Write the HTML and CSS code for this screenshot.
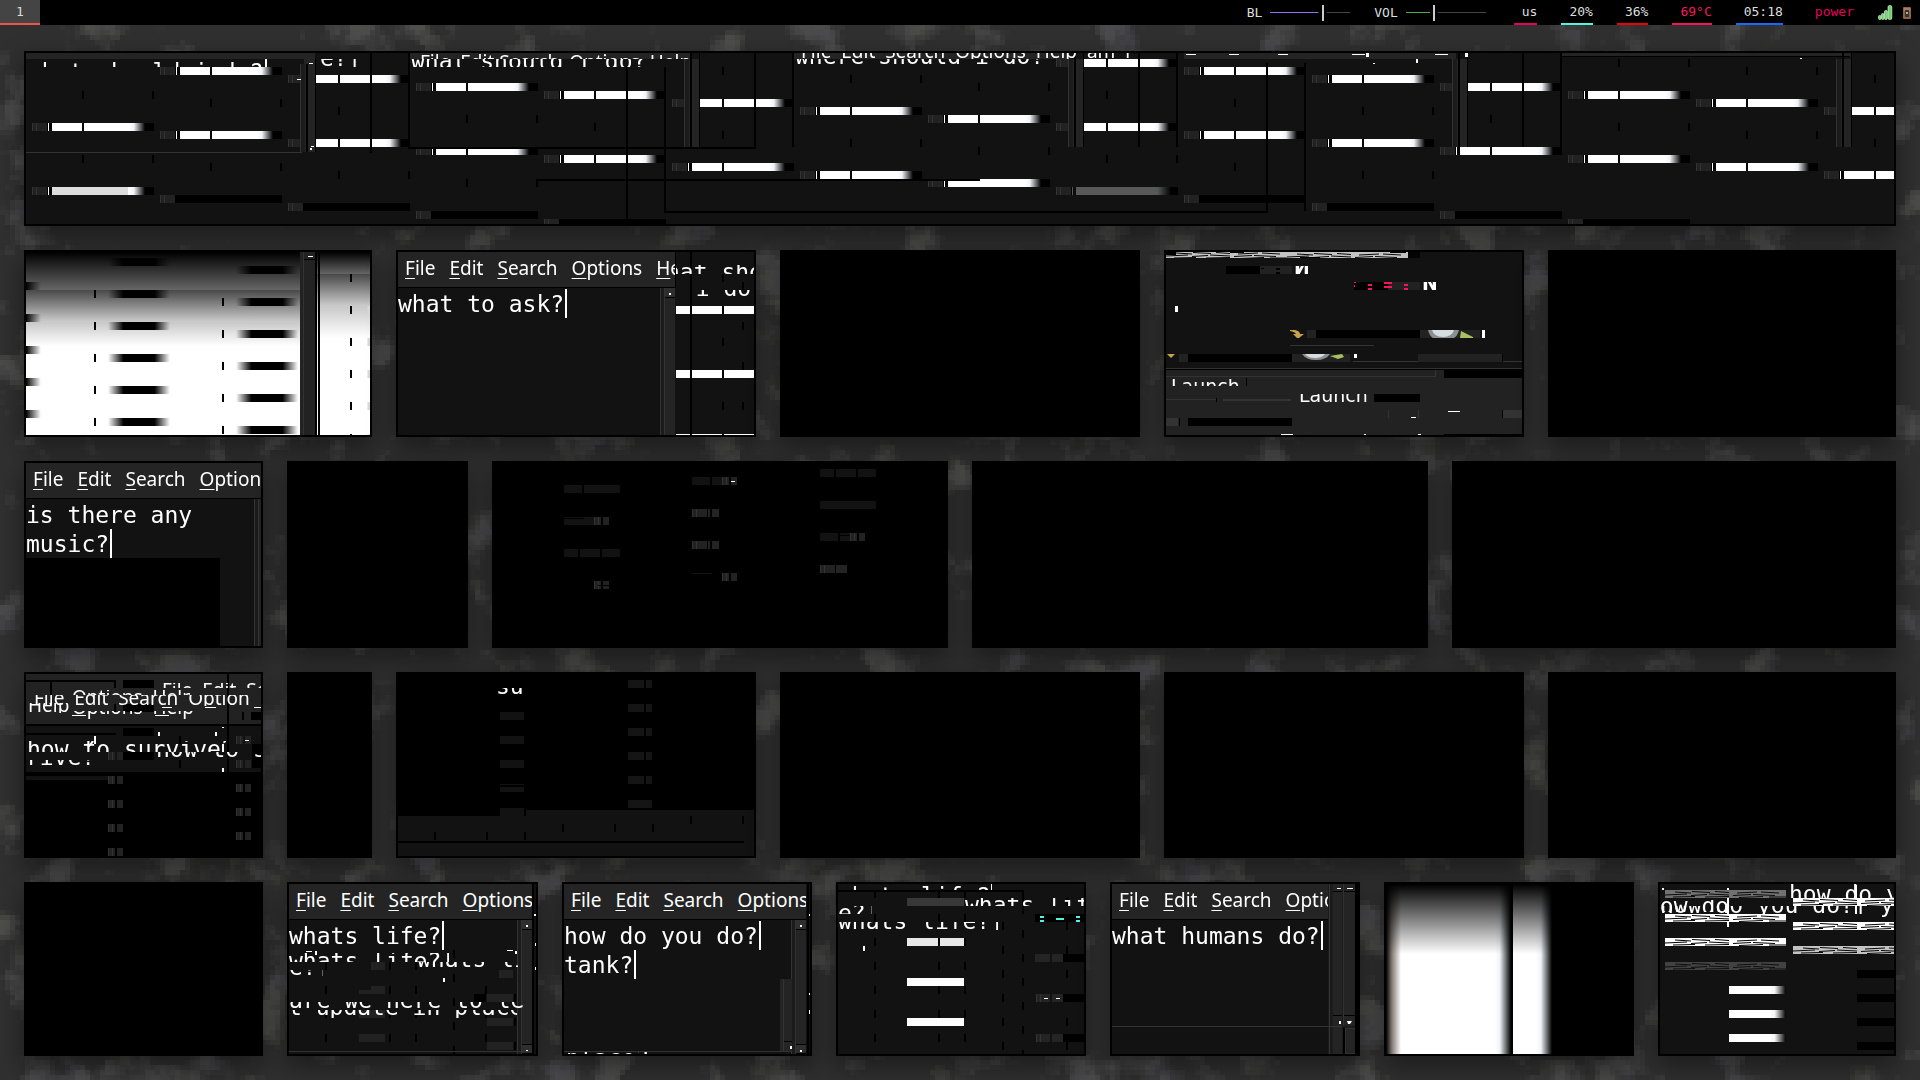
FILE: index.html
```html
<!DOCTYPE html>
<html lang="en">
<head>
<meta charset="utf-8">
<title>Desktop</title>
<link rel="stylesheet" href="styles.css">
</head>
<body>
<svg class="wallpaper" aria-hidden="true">
  <defs>
    <filter id="camo" filterUnits="userSpaceOnUse" x="0" y="0" width="100%" height="100%">
      <feTurbulence type="fractalNoise" baseFrequency="0.02" numOctaves="4" seed="7" result="n"/>
      <feColorMatrix in="n" type="matrix" values="0 .2 0 0 .25  0 .2 0 0 .25  0 0 .2 0 .25  5 0 0 0 -2.7" result="c"/>
      <feFlood x="2" y="2" width="1" height="1" flood-color="#000" result="dot"/>
      <feComposite in="dot" in2="dot" operator="over" x="0" y="0" width="5" height="5" result="cell"/>
      <feTile in="cell" result="grid"/>
      <feComposite in="c" in2="grid" operator="in"/>
      <feMorphology operator="dilate" radius="2"/>
    </filter>
    <linearGradient id="fadeR"><stop offset="0" stop-color="#fff"/><stop offset=".3" stop-color="#f0f4f8"/><stop offset="1" stop-color="#000"/></linearGradient>
    <linearGradient id="slot"><stop offset="0" stop-color="#000" stop-opacity="0"/><stop offset=".25" stop-color="#000"/><stop offset=".75" stop-color="#000"/><stop offset="1" stop-color="#100800" stop-opacity="0"/></linearGradient>
    <linearGradient id="slotEnd"><stop offset="0" stop-color="#000"/><stop offset="1" stop-color="#100800" stop-opacity="0"/></linearGradient>
    <g id="grip"><path fill="#222" d="M0 0h15v8H0z"/><path fill="#333" d="M0 0h1v8H0zM4 0h1v8H4z"/></g>
    <g id="bar">
      <use href="#grip"/>
      <path d="M15 0h107v8H15z"/>
      <path fill="#fff" d="M16 0h1v8h-1zM20 0h30v8H20zM52 0h46v8H52z"/>
      <path fill="url(#fadeR)" d="M97 0h16v8H97z"/>
    </g>
    <g id="tick"><path d="M50 0h2v8h-2zM120 0h2v8h-2z"/></g>
    <g id="cell"><use href="#bar"/><use href="#tick" y="32"/></g>
    <g id="off"><use href="#grip"/><path d="M15 0h107v8H15z"/></g>
    <g id="track"><path fill="#1b1b1b" d="M0 0h16v88H0z"/><path fill="#333" d="M0 0h1v88H0z"/><path fill="#242424" d="M5 0h10v88H5z"/><path d="M6 -6h2v94H6zM15 -6h1v94h-1z"/></g>
    <g id="nub"><path fill="#222" d="M0 0h7v8H0zM9 0h6v8H9z"/><path fill="#333" d="M0 0h1v8H0zM4 0h1v8H4z"/></g>
    <g id="scratch">
      <path fill="#fff" d="M0 0h121v8H0z"/>
      <path stroke="#000" fill="none" d="M10 2l16 1M27 1.500l18 1M50 1.500l14 1M72 3l20-1M96 2l18 1M0 5l22-1M26 5.500l16-1M44 4l20 1M68 5.500l18-1M88 4.500l22 1M8 7l22-.5M40 7l24-.5M74 7.500l24-1M104 7h17"/>
    </g>
  </defs>
  <rect width="100%" height="100%" filter="url(#camo)"/>
</svg>

<header class="bar">
  <nav><button class="workspace">1</button></nav>
  <div class="status">
    <label class="meter bl">BL<input type="range" min="0" max="100" value="67"></label>
    <label class="meter vol">VOL<input type="range" min="0" max="100" value="33"></label>
    <span class="stat pink">us</span>
    <span class="stat cyan">20%</span>
    <span class="stat red">36%</span>
    <span class="stat hot">69°C</span>
    <time class="stat blue">05:18</time>
    <button class="stat power">power</button>
    <svg class="tray" viewBox="0 0 34 16" aria-hidden="true">
      <g fill="#6fd06f" stroke="#d4f4d4" stroke-width=".7"><rect x=".5" y="10.500" width="2.500" height="4" rx="1"/><rect x="3.500" y="8.500" width="2.500" height="6" rx="1"/><rect x="6.500" y="5.500" width="2.800" height="9" rx="1"/><rect x="10" y=".5" width="3.800" height="14" rx="1.500"/></g>
      <rect x="25" y="2" width="8" height="12" rx="1" fill="#8d6446"/><rect x="26" y="3" width="6" height="3" fill="#a87e5c"/><rect x="27" y="5" width="4" height="7" fill="#3a3431"/><rect x="28" y="7" width="2" height="2" fill="#aaa"/>
    </svg>
  </div>
</header>

<main class="desktop">
  <div class="row row-a">
    <section class="win">
      <svg class="glitch" viewBox="26 53 1868 171" preserveAspectRatio="xMinYMin slice">
        <path fill="#242424" d="M26 53h279v6H26zM410 53h280v6H410zM794 53h274v6H794zM1184 53h272v6H1184zM1562 53h290v4H1562z"/>
        <use href="#cell" x="32" y="123"/><use href="#tick" x="32" y="91"/>
        <use href="#cell" x="160" y="67"/><use href="#cell" x="160" y="131"/><use href="#off" x="160" y="195"/>
        <use href="#cell" x="288" y="75"/><use href="#cell" x="288" y="139"/><use href="#off" x="288" y="203"/>
        <use href="#cell" x="416" y="83"/><use href="#cell" x="416" y="147"/><use href="#off" x="416" y="211"/>
        <use href="#cell" x="544" y="91"/><use href="#bar" x="544" y="155"/><use href="#off" x="544" y="219"/>
        <use href="#tick" x="672" y="67"/><use href="#cell" x="672" y="99"/><use href="#bar" x="672" y="163"/>
        <use href="#tick" x="800" y="75"/><use href="#cell" x="800" y="107"/><use href="#bar" x="800" y="171"/>
        <use href="#tick" x="928" y="83"/><use href="#cell" x="928" y="115"/><use href="#bar" x="928" y="179"/><path fill="#fff" d="M978 181h4v6h-4zM980 179h2v8h-2z"/>
        <use href="#cell" x="1056" y="59"/><use href="#cell" x="1056" y="123"/><use href="#bar" x="1056" y="187"/><path fill="#fff" d="M1106 187h2v8h-2z"/>
        <path fill="#121212" opacity=".7" d="M1072 187h98v8h-98z"/>
        <use href="#cell" x="1184" y="67"/><use href="#cell" x="1184" y="131"/><use href="#off" x="1184" y="195"/>
        <use href="#cell" x="1312" y="75"/><use href="#cell" x="1312" y="139"/><use href="#off" x="1312" y="203"/>
        <use href="#cell" x="1440" y="83"/><use href="#bar" x="1440" y="147"/><use href="#off" x="1440" y="211"/>
        <use href="#tick" x="1568" y="59"/><use href="#cell" x="1568" y="91"/><use href="#bar" x="1568" y="155"/><use href="#off" x="1568" y="219"/>
        <use href="#tick" x="1696" y="67"/><use href="#cell" x="1696" y="99"/><use href="#bar" x="1696" y="163"/>
        <use href="#tick" x="1824" y="75"/><use href="#cell" x="1824" y="107"/><use href="#bar" x="1824" y="171"/>
        <use href="#bar" x="32" y="187"/><path fill="#ddd" d="M52 187h76v8H52z"/>
        <use href="#track" x="300" y="64"/><path fill="#242424" d="M304 53h11v11h-11z"/><path fill="#fff" d="M309 63h4v1h-4zM311 146h3v1h-3zM310 148h2v2h-2zM297 79h4v1h-4z"/>
        <path fill="#333" d="M26 152h276v1H26z"/>
        <use href="#track" x="684" y="59"/><use href="#track" x="1068" y="59"/><use href="#track" x="1452" y="59"/><use href="#track" x="1836" y="59"/>
        <path d="M370 53h2v100h-2zM408 53h2v96h-2zM410 147h346v2H410zM754 53h2v96h-2zM792 53h2v94h-2zM626 66h2v153h-2zM536 179h444v2H536zM664 67h2v146h-2zM664 211h604v2H664zM1266 63h2v150h-2zM1304 63h2v148h-2zM1138 53h2v94h-2zM1176 53h2v94h-2zM1522 53h2v94h-2zM1560 53h2v94h-2zM1562 56h288v1h-288z"/>
        <path fill="#fff" d="M1186 54h10v1h-10zM1229 54h10v1h-10zM1278 54h10v1h-10zM1352 54h13v1h-13zM1366 53h3v4h-3zM1435 54h13v1h-13zM1465 53h3v4h-3zM1416 59h2v4h-2zM1373 63h2v1h-2zM1800 58h2v1h-2zM265 59h2v8h-2z"/>
        <svg x="26" y="60" width="250" height="7"><text class="mono" x="2" y="20">what should i do?</text></svg>
        <svg x="320" y="59" width="50" height="8"><text class="mono" x="0" y="7">e?|</text></svg>
        <svg x="410" y="54" width="292" height="5"><text class="menu-text" x="10" y="15">File  Edit Search  Options  Help</text></svg>
        <svg x="410" y="59" width="244" height="8"><text class="mono" x="1" y="10">what should i do?</text></svg>
        <svg x="797" y="53" width="380" height="6"><text class="menu-text" x="4" y="5">File  Edit  Search  Options  Help  am  i</text></svg>
        <svg x="794" y="59" width="250" height="8"><text class="mono" x="1" y="5">where should i do?|</text></svg>
      </svg>
    </section>
  </div>

  <div class="row row-b">
    <section class="win">
      <svg class="glitch" viewBox="26 252 344 183" preserveAspectRatio="xMinYMin slice">
        <defs>
          <linearGradient id="r1" x1="0" y1="0" x2="0" y2="1"><stop offset="0"/><stop offset="1" stop-color="#666"/></linearGradient>
          <linearGradient id="r2" x1="0" y1="0" x2="0" y2="1"><stop offset="0" stop-color="#484848"/><stop offset="1" stop-color="#ccc"/></linearGradient>
          <linearGradient id="r3" x1="0" y1="0" x2="0" y2="1"><stop offset="0" stop-color="#c8c8c8"/><stop offset="1" stop-color="#fff"/></linearGradient>
        </defs>
        <path fill="#fff" d="M26 252h344v183H26z"/>
        <path fill="url(#r1)" d="M26 252h274v38H26z"/><path fill="url(#r2)" d="M26 290h274v32H26z"/><path fill="url(#r3)" d="M26 322h274v24H26z"/>
        <path fill="url(#r1)" d="M317 252h53v22h-53z"/><path fill="url(#r2)" d="M317 274h53v32h-53z"/><path fill="url(#r3)" d="M317 306h53v32h-53z"/>
        <g fill="url(#slot)">
          <rect x="108" y="258" width="62" height="8"/><rect x="108" y="290" width="62" height="8"/><rect x="108" y="322" width="62" height="8"/><rect x="108" y="354" width="62" height="8"/><rect x="108" y="386" width="62" height="8"/><rect x="108" y="418" width="62" height="8"/>
          <rect x="236" y="266" width="62" height="8"/><rect x="236" y="298" width="62" height="8"/><rect x="236" y="330" width="62" height="8"/><rect x="236" y="362" width="62" height="8"/><rect x="236" y="394" width="62" height="8"/><rect x="236" y="426" width="62" height="8"/>
        </g>
        <g fill="url(#slotEnd)"><rect x="26" y="282" width="15" height="8"/><rect x="26" y="314" width="15" height="8"/><rect x="26" y="346" width="15" height="8"/><rect x="26" y="378" width="15" height="8"/><rect x="26" y="410" width="15" height="8"/></g>
        <g stroke="#000" stroke-width="2" stroke-dasharray="8 24"><path d="M95 290v145M223 298v137M351 274v161"/></g>
        <g stroke="#d4dade" stroke-width="3" stroke-dasharray="8 24"><path d="M369 306v129"/></g>
        <path fill="#222" d="M300 252h15v183h-15z"/><path fill="#333" d="M303 252h1v183h-1z"/><path d="M315 252h2v183h-2zM318 252h2v183h-2zM304 259h11v1h-11z"/><path fill="#fff" d="M308 256h5v1h-5z"/>
      </svg>
    </section>
    <section class="win">
      <div class="editor cut-b">
        <nav class="menu"><button>File</button><button>Edit</button><button>Search</button><button>Options</button><button>Help</button></nav>
        <div class="page"><textarea spellcheck="false" aria-label="Note">what to ask?</textarea><i class="caret" style="--col:12;--line:0"></i></div>
        <div class="scroll"><i></i></div>
      </div>
      <svg class="glitch" viewBox="398 252 356 183" preserveAspectRatio="xMinYMin slice">
        <path fill="#121212" d="M676 252h78v183h-78z"/>
        <path fill="#fff" d="M676 306h78v8h-78zM676 370h78v8h-78zM676 434h78v1h-78z"/>
        <path d="M675 252h1v36h-1zM690 252h2v183h-2z"/>
        <g stroke="#000" stroke-width="2"><path stroke-dasharray="8 24" d="M723 274v161"/><path stroke-dasharray="8 32" d="M743 282v153"/><path d="M723 370v8"/></g>
        <svg x="676" y="265" width="78" height="9"><text class="mono" x="-10" y="15">hat should</text></svg>
        <svg x="676" y="290" width="78" height="7"><text class="mono" x="-8" y="6">r i do</text></svg>
      </svg>
    </section>
    <section class="win"></section>
    <section class="win">
      <svg class="glitch" viewBox="1166 252 356 183" preserveAspectRatio="xMinYMin slice">
        <g opacity=".75"><svg x="1166" y="252" width="254" height="6"><path d="M0 0h254v6H0z"/><use href="#scratch" x="0" y="-1"/><use href="#scratch" x="121"/></svg></g>
        <path d="M1226 266h34v8h-34zM1354 282h34v8h-34zM1316 330h104v8h-104zM1188 354h104v8h-104zM1166 369h356v1h-356z"/>
        <path fill="#222" d="M1260 266h32v8h-32zM1388 282h32v8h-32zM1307 330h9v8h-9zM1420 330h60v8h-60zM1179 354h9v8h-9zM1292 354h58v8h-58zM1418 354h84v8h-84zM1166 370h356v65h-356z"/>
        <path d="M1261 268h3v1h-3zM1276 268h4v2h-4zM1276 272h4v2h-4zM1166 252h10v3h-10zM1230 252h14v1h-14zM1300 257h20v1h-20zM1390 252h16v1h-16z"/>
        <path fill="#f5155a" d="M1354 282h2v1h-2zM1354 285h1v2h-1zM1368 284h4v2h-4zM1368 288h4v2h-4zM1384 282h8v2h-8zM1384 286h8v2h-8zM1404 284h4v2h-4zM1404 288h4v2h-4z"/>
        <svg x="1294" y="266" width="14" height="8"><text class="label-text bold" x="0" y="8">И</text></svg>
        <svg x="1422" y="282" width="14" height="8"><text class="label-text bold" x="0" y="8">N</text></svg>
        <path fill="#fff" d="M1175 306h3v6h-3zM1482 330h3v8h-3zM1354 354h3v4h-3zM1448 411h12v1h-12zM1411 417h5v1h-5zM1281 434h12v1h-12zM1364 434h2v1h-2zM1418 434h3v1h-3z"/>
        <path fill="#c9a04c" d="M1290 330h5q5 1 5 4h4l-5 4h-2l-4-4h3q-1-2-6-3zM1167 354h8l-4 4z"/>
        <path fill="#8b8f90" d="M1428 330h31q-1 5-5 8h-21q-4-3-5-8zM1302 354h28q-4 6-14 6t-14-6z"/><path fill="#d5dde0" d="M1432 330h22q-2 7-11 7t-11-7zM1305 354h20q-3 4-10 4t-10-4z"/>
        <path fill="#a8c060" d="M1461 331l12 6v1h-13zM1330 356l12-2 2 3-6 2z"/>
        <path fill="#333" d="M1290 345h84v1h-84zM1353 361h65v1h-65zM1503 361h19v1h-19zM1166 368h356v1h-356zM1166 376h270v1h-270zM1435 370h1v7h-1zM1166 399h50v1h-50zM1223 399h68v2h-68zM1388 410h1v8h-1zM1418 410h1v8h-1zM1503 410h19v8h-19zM1166 418h12v8h-12z"/>
        <path d="M1502 354h1v8h-1zM1444 370h78v8h-78zM1246 378h1v8h-1zM1374 394h46v8h-46zM1216 398h1v4h-1zM1502 410h1v8h-1zM1179 418h1v8h-1zM1188 418h104v8h-104zM1444 434h78v1h-78z"/>
        <svg x="1166" y="379" width="80" height="7"><text class="label-text" x="5" y="14">Launch</text></svg>
        <svg x="1294" y="394" width="78" height="8"><text class="label-text" x="5" y="8">Launch</text></svg>
      </svg>
    </section>
    <section class="win"></section>
  </div>

  <div class="row row-c">
    <section class="win">
      <div class="editor">
        <nav class="menu"><button>File</button><button>Edit</button><button>Search</button><button>Options</button></nav>
        <div class="page"><textarea spellcheck="false" aria-label="Note">is there any
music?</textarea><i class="caret" style="--col:6;--line:1"></i></div>
        <div class="scroll narrow"></div>
      </div>
      <svg class="glitch" viewBox="26 463 235 183" preserveAspectRatio="xMinYMin slice"><path d="M26 558h194v88H26z"/></svg>
    </section>
    <section class="win"></section>
    <section class="win">
      <svg class="glitch" viewBox="494 463 452 183" preserveAspectRatio="xMinYMin slice">
        <path d="M494 463h452v183H494z"/>
        <path fill="#121212" d="M564 485h18v8h-18zM584 485h36v8h-36zM564 517h30v8h-30zM564 549h14v8h-14zM580 549h20v8h-20zM602 549h18v8h-18zM692 477h18v8h-18zM712 477h10v8h-10zM820 469h14v8h-14zM836 469h20v8h-20zM858 469h18v8h-18zM820 501h56v8h-56zM820 533h18v8h-18zM840 533h10v8h-10zM692 573h20v1h-20z"/>
        <path d="M564 518h20v1h-20zM840 535h18v1h-18z"/>
        <use href="#nub" x="594" y="517"/><use href="#nub" x="594" y="581"/><use href="#nub" x="722" y="477"/><use href="#nub" x="722" y="573"/><use href="#nub" x="850" y="533"/>
        <use href="#grip" x="692" y="509"/><use href="#grip" x="692" y="541"/><use href="#grip" x="820" y="565"/>
        <path fill="#242424" d="M708 509h2v8h-2zM712 509h7v8h-7zM708 541h2v8h-2zM712 541h7v8h-7zM836 565h11v8h-11z"/>
        <path fill="#fff" d="M731 481h4v1h-4z"/><path d="M598 585h11v1h-11z"/>
      </svg>
    </section>
    <section class="win"></section>
    <section class="win"></section>
  </div>

  <div class="row row-d">
    <section class="win">
      <svg class="glitch" viewBox="26 674 235 182" preserveAspectRatio="xMinYMin slice">
        <path d="M26 674h235v182H26z"/>
        <path fill="#222" d="M26 674h235v50H26z"/><path fill="#121212" d="M26 726h235v46H26zM26 776h82v4H26z"/>
        <path d="M26 680h90v2H26zM50 682h2v18h-2zM114 682h2v6h-2zM123 680h31v8h-31zM123 704h31v8h-31zM114 704h2v8h-2zM227 674h2v98h-2zM242 712h2v8h-2zM251 712h10v8h-10zM26 733h90v2H26zM123 728h31v8h-31zM123 752h31v8h-31zM252 744h9v24h-9zM179 736h2v8h-2zM179 760h2v8h-2z"/>
        <g><use href="#nub" x="108" y="752"/><use href="#nub" x="108" y="776"/><use href="#nub" x="108" y="800"/><use href="#nub" x="108" y="824"/><use href="#nub" x="108" y="848"/><use href="#nub" x="236" y="736"/><use href="#nub" x="236" y="760"/><use href="#nub" x="236" y="784"/><use href="#nub" x="236" y="808"/><use href="#nub" x="236" y="832"/></g>
        <svg x="160" y="683" width="101" height="5"><text class="menu-text" x="2" y="14">File  Edit  Search</text></svg>
        <svg x="26" y="695" width="235" height="11"><text class="menu-text" x="8" y="10">File  Edit  Search  Option</text></svg>
        <svg x="70" y="690" width="120" height="5"><text class="menu-text" x="2" y="14">Options  Help</text></svg>
        <svg x="26" y="703" width="44" height="10"><text class="menu-text" x="2" y="9">Help</text></svg>
        <svg x="70" y="711" width="130" height="8"><text class="menu-text" x="2" y="3">Options  Help</text></svg>
        <path fill="#fff" d="M72 715h14v1H72zM155 715h14v1h-14zM162 707h10v1h-10zM205 707h11v1h-11zM254 707h7v1h-7zM94 736h2v8h-2zM158 732h2v4h-2zM215 732h2v4h-2zM222 727h2v1h-2zM222 744h2v8h-2zM222 768h2v4h-2zM245 740h4v1h-4z"/>
        <svg x="26" y="741" width="200" height="11"><text class="mono" x="1" y="16">how to survive?</text></svg>
        <svg x="156" y="752" width="105" height="7"><text class="mono" x="0" y="5">how to s</text></svg>
        <svg x="26" y="760" width="74" height="7"><text class="mono" x="0" y="5">rive?|</text></svg>
        <svg x="82" y="741" width="12" height="6"><text class="mono" x="0" y="13">?</text></svg>
      </svg>
    </section>
    <section class="win"></section>
    <section class="win">
      <svg class="glitch" viewBox="398 674 356 182" preserveAspectRatio="xMinYMin slice">
        <path d="M398 674h356v182H398z"/>
        <path fill="#121212" d="M398 816h128v25H398zM526 810h228v31H526zM500 808h24v8h-24zM398 843h356v13H398zM500 712h24v8h-24zM500 736h24v8h-24zM500 760h24v8h-24zM500 784h24v1h-24zM500 787h24v5h-24z"/>
        <path fill="#151515" d="M628 680h16v8h-16zM646 680h6v8h-6zM628 704h16v8h-16zM646 704h6v8h-6zM628 728h16v8h-16zM646 728h6v8h-6zM628 752h16v8h-16zM646 752h6v8h-6zM628 776h16v8h-16zM646 776h6v8h-6zM628 800h24v8h-24z"/>
        <path fill="#121212" d="M744 841h10v2h-10z"/>
        <path d="M434 832h2v8h-2zM486 832h2v8h-2zM524 832h2v8h-2zM562 824h2v8h-2zM614 824h2v8h-2zM652 824h2v8h-2zM690 816h2v8h-2zM742 816h2v8h-2z"/>
        <svg x="498" y="688" width="40" height="8"><text class="mono" x="-2" y="6">su</text></svg>
      </svg>
    </section>
    <section class="win"></section>
    <section class="win"></section>
    <section class="win"></section>
  </div>

  <div class="row row-e">
    <section class="win"></section>
    <section class="win">
      <div class="editor cut-e">
        <nav class="menu"><button>File</button><button>Edit</button><button>Search</button><button>Options</button></nav>
        <div class="page"><textarea spellcheck="false" aria-label="Note">whats life?</textarea><i class="caret" style="--col:11;--line:0"></i></div>
        <div class="scroll"><i></i><i class="down"></i></div>
      </div>
      <svg class="glitch" viewBox="289 884 247 170" preserveAspectRatio="xMinYMin slice">
        <path fill="#222" d="M371 962h14v8h-14zM499 970h14v8h-14zM359 990h26v4h-26zM371 986h14v8h-14zM487 994h26v8h-26zM359 1010h26v8h-26zM487 1018h26v8h-26zM359 1034h26v8h-26zM487 1042h26v8h-26z"/>
        <g stroke="#000" stroke-width="2"><path stroke-dasharray="8 16" d="M326 962v84M390 962v84M416 962v84M454 950v104M515 994v56"/><path stroke-dasharray="8 16" d="M486 986v68"/></g><path d="M474 994h12v8h-12zM532 884h2v170h-2z"/>
        <svg x="289" y="953" width="160" height="9"><text class="mono" x="0" y="16">whats life?|</text></svg>
        <svg x="416" y="962" width="102" height="6"><text class="mono" x="1" y="5">whats li</text></svg>
        <svg x="289" y="970" width="34" height="6"><text class="mono" x="0" y="5">e?|</text></svg>
        <svg x="289" y="1002" width="247" height="8"><text class="mono" x="0" y="6">are we here to le</text></svg>
        <svg x="289" y="1010" width="228" height="8"><text class="mono" x="-1" y="5">t update in place</text></svg>
        <path fill="#fff" d="M306 951h6v1h-6zM315 951h2v4h-2zM443 978h2v4h-2zM507 950h6v1h-6zM515 951h2v3h-2zM534 914h2v2h-2zM535 943h1v3h-1zM535 967h1v3h-1z"/><path fill="#333" d="M289 1051h243v1H289z"/>
      </svg>
    </section>
    <section class="win">
      <div class="editor cut-e">
        <nav class="menu"><button>File</button><button>Edit</button><button>Search</button><button>Options</button></nav>
        <div class="page"><textarea spellcheck="false" aria-label="Note">how do you do?
tank?</textarea><i class="caret" style="--col:14;--line:0"></i><i class="caret" style="--col:5;--line:1"></i></div>
        <div class="scroll"><i></i><i class="down"></i></div>
      </div>
      <svg class="glitch" viewBox="564 884 246 170" preserveAspectRatio="xMinYMin slice">
        <path fill="#242424" d="M780 979h12v73h-12z"/><path fill="#333" d="M783 979h1v73h-1zM564 1051h228v1H564z"/><path d="M784 1041h8v1h-8zM807 884h2v170h-2z"/><path fill="#fff" d="M790 1046h2v3h-2zM809 914h1v2h-1zM809 993h1v2h-1zM809 1010h1v4h-1z"/>
        <svg x="564" y="1052" width="90" height="2"><text class="mono" x="2" y="14">place?|</text></svg>
      </svg>
    </section>
    <section class="win">
      <svg class="glitch" viewBox="838 884 246 170" preserveAspectRatio="xMinYMin slice">
        <g stroke="#000" stroke-width="2"><path stroke-dasharray="8 16" d="M875 890v160M939 890v160M965 890v160M1003 922v128M1023 930v124M1067 898v152"/></g>
        <path d="M838 890h186v2H838zM1022 890h2v24h-2zM1035 914h49v8h-49zM1063 954h21v8h-21zM1063 994h21v8h-21zM1063 1034h21v8h-21z"/>
        <path fill="#383838" d="M907 898h57v8h-57z"/><path fill="#e8e8e8" d="M907 938h31v8h-31zM940 938h24v8h-24z"/><path fill="#fff" d="M907 978h57v8h-57zM907 1018h57v8h-57z"/>
        <path fill="#242424" d="M1035 954h15v8h-15zM1052 954h11v8h-11zM1036 994h14v8h-14zM1052 994h11v8h-11zM1036 1034h14v8h-14zM1052 1034h11v8h-11z"/><path fill="#333" d="M1036 994h1v8h-1zM1040 994h1v8h-1zM1036 1034h1v8h-1zM1040 1034h1v8h-1z"/>
        <path fill="#4ff5dc" d="M1040 916h4v2h-4zM1040 920h4v2h-4zM1056 918h8v2h-8zM1076 916h4v2h-4zM1076 920h4v2h-4z"/>
        <path fill="#fff" d="M1044 998h4v1h-4zM1056 998h4v1h-4zM863 946h2v5h-2zM991 884h1v6h-1z"/>
        <svg x="838" y="884" width="160" height="6"><text class="mono" x="0" y="20">whats life?</text></svg>
        <svg x="965" y="898" width="119" height="8"><text class="mono" x="0" y="15">whats lif</text></svg>
        <svg x="838" y="906" width="34" height="8"><text class="mono" x="0" y="15">e?|</text></svg>
        <svg x="838" y="922" width="160" height="8"><text class="mono" x="0" y="7">whats life?|</text></svg>
      </svg>
    </section>
    <section class="win">
      <div class="editor cut-f">
        <nav class="menu"><button>File</button><button>Edit</button><button>Search</button><button>Options</button></nav>
        <div class="page"><textarea spellcheck="false" aria-label="Note">what humans do?</textarea><i class="caret" style="--col:15;--line:0"></i></div>
      </div>
      <svg class="glitch" viewBox="1112 884 246 170" preserveAspectRatio="xMinYMin slice">
        <path fill="#1b1b1b" d="M1328 884h26v170h-26z"/><path fill="#242424" d="M1333 884h9v170h-9zM1344 884h11v142h-11z"/><path fill="#333" d="M1112 1026h230v1h-230zM1329 884h1v170h-1zM1343 884h1v142h-1zM1345 1028h11v26h-11z"/>
        <path fill="#242424" d="M1346 1029h9v24h-9z"/><path d="M1333 891h9v1h-9zM1344 891h11v1h-11zM1333 1015h9v1h-9zM1344 1015h11v1h-11zM1343 1028h2v26h-2zM1355 884h3v170h-3z"/>
        <path fill="#fff" d="M1337 888h4v1h-4zM1347 888h6v1h-6zM1339 1021h2v3h-2zM1347 1021h5l-2 3h-2z"/>
      </svg>
    </section>
    <section class="win">
      <svg class="glitch" viewBox="1386 884 246 170" preserveAspectRatio="xMinYMin slice">
        <defs>
          <linearGradient id="in"><stop offset="0"/><stop offset=".4" stop-color="#847c76"/><stop offset="1" stop-color="#fff"/></linearGradient>
          <linearGradient id="top" x1="0" y1="0" x2="0" y2="1"><stop offset="0"/><stop offset="1" stop-opacity="0"/></linearGradient>
        </defs>
        <path d="M1386 884h246v170h-246z"/><path fill="#fff" d="M1400 884h96v170h-96zM1513 884h24v170h-24z"/>
        <path fill="url(#in)" d="M1386 884h15v170h-15z"/><path fill="url(#fadeR)" d="M1495 884h16v170h-16z"/><path fill="url(#fadeR)" d="M1536 884h16v170h-16z"/>
        <path fill="url(#top)" d="M1386 884h246v70h-246z"/>
      </svg>
    </section>
    <section class="win">
      <svg class="glitch" viewBox="1660 884 234 170" preserveAspectRatio="xMinYMin slice">
        <svg x="1660" y="900" width="67" height="12"><text class="mono" x="-14" y="14">how do?</text></svg>
        <svg x="1660" y="906" width="205" height="8"><text class="mono" x="0" y="7">how do you do?|</text></svg>
        <svg x="1788" y="884" width="106" height="14"><text class="mono" x="1" y="18">how do you</text></svg>
        <path fill="#fff" d="M1662 888h2v2h-2zM1727 888h2v2h-2zM1727 898h2v16h-2zM1727 922h2v5h-2zM1855 885h2v29h-2z"/>
        <svg x="1876" y="906" width="18" height="14"><text class="mono" x="4" y="6">y</text></svg>
        <use href="#scratch" x="1665" y="914"/><use href="#scratch" x="1665" y="938"/><use href="#scratch" x="1793" y="898"/><use href="#scratch" x="1793" y="922"/>
        <g opacity=".4"><use href="#scratch" x="1665" y="890"/></g><g opacity=".2"><use href="#scratch" x="1665" y="962"/></g><g opacity=".75"><use href="#scratch" x="1793" y="946"/></g>
        <path fill="#fff" d="M1729 986h42v8h-42zM1729 1010h42v8h-42zM1729 1034h42v8h-42z"/><path fill="url(#fadeR)" d="M1770 986h16v8h-16z"/><path fill="url(#fadeR)" d="M1770 1010h16v8h-16z"/><path fill="url(#fadeR)" d="M1770 1034h16v8h-16z"/>
        <path d="M1857 970h37v8h-37zM1857 994h37v8h-37zM1857 1018h37v8h-37zM1857 1042h37v8h-37z"/>
      </svg>
    </section>
  </div>
</main>
</body>
</html>
```
FILE: styles.css
```css
* { box-sizing: border-box; }

body {
  margin: 0;
  min-height: 100vh;
  display: flex;
  flex-direction: column;
  background: #303030;
  color: #fff;
  font-family: "Noto Sans", sans-serif;
}

button {
  margin: 0;
  padding: 0;
  border: 0;
  background: none;
  color: inherit;
  font: inherit;
}

.wallpaper {
  position: fixed;
  inset: 0;
  z-index: -1;
  width: 100%;
  height: 100%;
  opacity: .25;
}

/* status bar */
.bar {
  display: flex;
  justify-content: space-between;
  height: 25px;
  background: #000;
  color: #ddd;
  font: 13px/24px "DejaVu Sans Mono", monospace;
}

.workspace {
  width: 40px;
  height: 25px;
  background: #444;
  border-bottom: 2px solid #f0544c;
}

.status {
  display: flex;
  gap: 24px;
  padding-right: 8px;
}

.meter {
  display: flex;
  align-items: center;
  gap: 8px;
}

.meter input {
  appearance: none;
  width: 80px;
  height: 16px;
  margin: 0;
  background: linear-gradient(90deg, var(--on) 0 var(--at), #444 var(--at)) center / 100% 1px no-repeat;
}

.meter input::-webkit-slider-thumb {
  appearance: none;
  width: 8px;
  height: 16px;
  background: linear-gradient(90deg, #000 3px, #ccc 3px 5px, #000 5px);
}

.bl { --on: #9b6dff; --at: 60%; }
.vol { --on: #4caf50; --at: 30%; margin-right: 4px; }

.stat {
  height: 25px;
  padding-left: 8px;
  border-bottom: 2px solid transparent;
}

.pink { border-color: #e6005c; }
.cyan { border-color: #4ff5dc; }
.red { border-color: #f00000; }
.hot { border-color: #f5155a; color: #f5155a; }
.blue { border-color: #1668ff; }
.power { color: #e6005c; }

.tray {
  align-self: center;
  width: 34px;
  height: 16px;
}

/* tiled windows */
.desktop {
  flex: 1;
  display: grid;
  grid-template-rows: 175fr 187fr 187fr 186fr 174fr;
  gap: 24px;
  padding: 26px 24px 24px;
}

.row { display: grid; gap: 24px; }
.row-b { grid-template-columns: 348fr 360fr 360fr 360fr 348fr; }
.row-c { grid-template-columns: 239fr 181fr 456fr 456fr 444fr; }
.row-d { grid-template-columns: 239fr 85fr 360fr 360fr 360fr 348fr; }
.row-e { grid-template-columns: 239fr 251fr 250fr 250fr 250fr 250fr 238fr; }

.win {
  position: relative;
  display: flex;
  min-width: 0;
  overflow: hidden;
  border: 2px solid #000;
  background: #121212;
  box-shadow: 0 10px 24px 2px rgba(0, 0, 0, .4);
}

.win:empty { background: #000; }

.glitch {
  position: absolute;
  inset: 0;
  width: 100%;
  height: 100%;
  pointer-events: none;
}

.mono, .menu-text, .label-text { fill: #fff; white-space: pre; }
.mono { font: 23px "DejaVu Sans Mono", monospace; }
.menu-text { font: 19px "Noto Sans", sans-serif; }
.label-text { font: 19px "DejaVu Sans", sans-serif; }
.bold { font-weight: 700; }

/* text editor */
.editor {
  flex: 1;
  min-width: 0;
  display: grid;
  grid-template: 36px 1fr / 1fr auto;
}

.cut-b { margin-right: 79px; }
.cut-e { margin-right: 4px; }
.cut-f { margin-right: 30px; }

.menu {
  grid-column: 1 / -1;
  display: flex;
  align-items: flex-start;
  gap: 14px;
  padding-left: 7px;
  overflow: hidden;
  border-bottom: 1px solid #000;
  background: #242424;
  font-size: 19px;
  line-height: 33px;
}

.menu button::first-letter {
  text-decoration: underline;
  text-underline-offset: 3px;
}

.page {
  position: relative;
  min-width: 0;
  padding-top: 2px;
  font: 23px/29px "DejaVu Sans Mono", monospace;
}

.page textarea {
  display: block;
  width: 100%;
  height: 100%;
  padding: 0;
  border: 0;
  outline: 0;
  resize: none;
  overflow: hidden;
  white-space: pre;
  background: none;
  color: inherit;
  font: inherit;
}

.caret {
  position: absolute;
  left: calc(var(--col) * 1ch + 1px);
  top: calc(var(--line) * 29px + 1px);
  width: 2px;
  height: 29px;
  background: #fff;
}

.scroll {
  display: flex;
  flex-direction: column;
  width: 15px;
  padding-left: 4px;
  border-left: 1px solid #333;
  background: linear-gradient(90deg, #1b1b1b 3px, #333 3px 4px, #242424 4px);
}

.scroll.narrow { width: 7px; }

.scroll i {
  height: 10px;
  border-bottom: 1px solid #000;
  background: conic-gradient(from 150deg at 50% 40%, #fff 60deg, #2e2e2e 0) center / 6px 5px no-repeat #2e2e2e;
}

.scroll .down {
  margin-top: auto;
  border-top: 1px solid #000;
}
```
